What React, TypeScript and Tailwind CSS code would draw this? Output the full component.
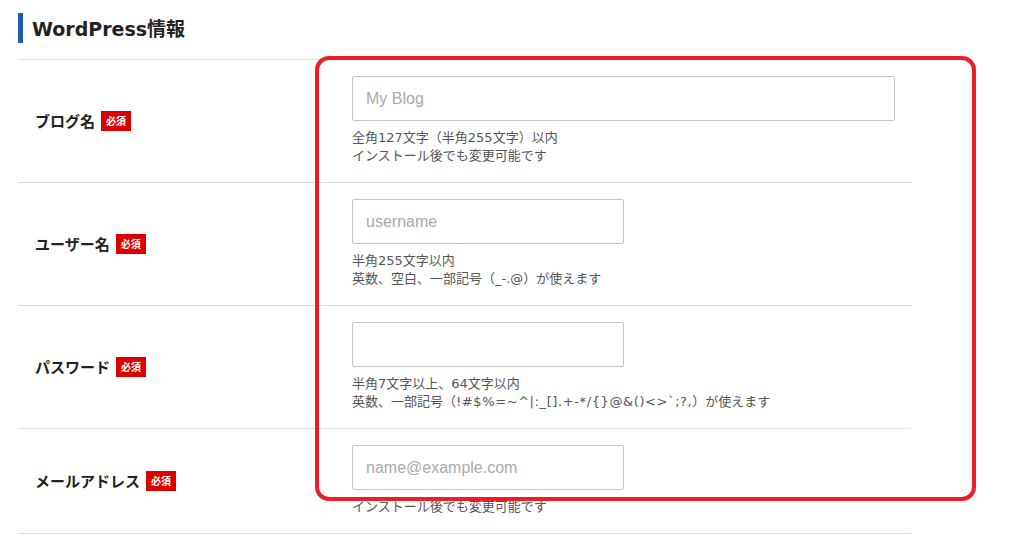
import React from "react";

const jp = { fontFamily: '"Noto Sans CJK JP", "Noto Sans", sans-serif' };
const mixed = { fontFamily: '"DejaVu Sans", "Noto Sans CJK JP", sans-serif' };

function Badge() {
  return (
    <span className="ml-[6px] inline-flex h-[20px] w-[30px] items-center justify-center bg-[#dd0000] text-[10px] font-bold leading-none text-white">
      必須
    </span>
  );
}

type Row = {
  label: string;
  placeholder: string;
  wide?: boolean;
  help: React.ReactNode[];
};

const rows: Row[] = [
  {
    label: "ブログ名",
    placeholder: "My Blog",
    wide: true,
    help: ["全角127文字（半角255文字）以内", "インストール後でも変更可能です"],
  },
  {
    label: "ユーザー名",
    placeholder: "username",
    help: ["半角255文字以内", "英数、空白、一部記号（_-.@）が使えます"],
  },
  {
    label: "パスワード",
    placeholder: "",
    help: [
      "半角7文字以上、64文字以内",
      <>
        英数、一部記号（<span className="tracking-[0.6px]">!#$%=~^|:_[].+-*/{"{}"}@&amp;()&lt;&gt;`;?,</span>）が使えます
      </>,
    ],
  },
  {
    label: "メールアドレス",
    placeholder: "name@example.com",
    help: ["インストール後でも変更可能です"],
  },
];

export default function App() {
  return (
    <div className="relative h-[540px] w-[1024px] overflow-hidden bg-white" style={jp}>
      <div className="ml-[18px] w-[893px] pt-[13px]">
        <div className="flex h-[30px] items-center border-l-[5px] border-[#1c5cae] pl-[9px]">
          <h2 className="pt-[2px] text-[19px] font-bold leading-none text-[#222]" style={mixed}>
            WordPress情報
          </h2>
        </div>
        <div className="mt-[16px] border-t border-[#dddddd]">
          {rows.map((r) => (
            <div key={r.label} className="flex border-b border-[#dddddd]">
              <div className="flex w-[334px] shrink-0 items-center pl-[17px]">
                <span className="text-[15px] font-bold text-[#222]">{r.label}</span>
                <Badge />
              </div>
              <div className="flex-1 pb-[17px] pt-[16px]">
                <input
                  className={`h-[45px] rounded-[2px] border border-[#c4c4c4] px-[13px] text-[16px] text-[#333] placeholder:text-[#aaaaaa] outline-none ${r.wide ? "w-[543px]" : "w-[272px]"}`}
                  style={{ fontFamily: '"Liberation Sans", Arial, sans-serif' }}
                  placeholder={r.placeholder}
                  readOnly
                />
                <div className="mt-[8px] text-[13px] leading-[18px] text-[#555]" style={mixed}>
                  {r.help.map((h, i) => (
                    <div key={i}>{h}</div>
                  ))}
                </div>
              </div>
            </div>
          ))}
        </div>
      </div>
      <div className="pointer-events-none absolute left-[315px] top-[56px] h-[445px] w-[661px] rounded-[14px] border-4 border-[#ee1c25]" />
    </div>
  );
}
